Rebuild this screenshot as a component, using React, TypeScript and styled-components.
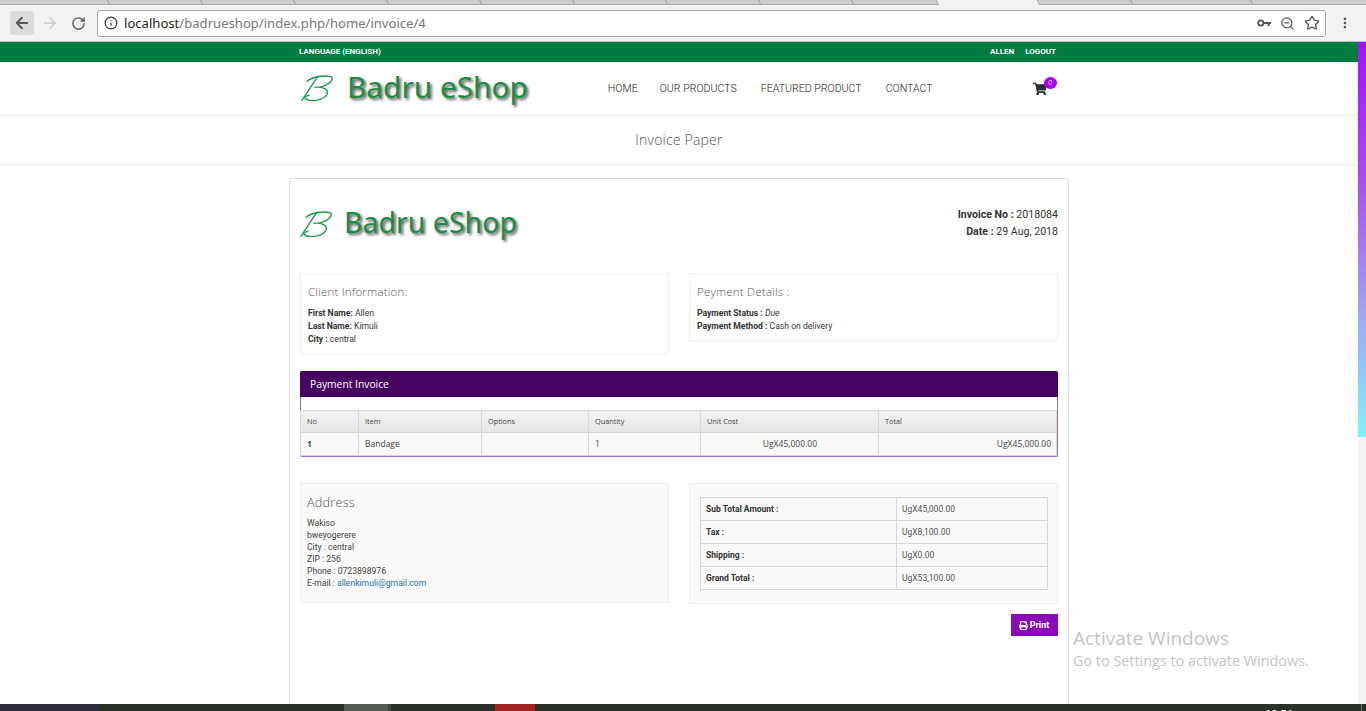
import styled, { createGlobalStyle } from 'styled-components';
import { ArrowLeft, ArrowRight, RotateCw, Info, ZoomOut, Star, MoreVertical } from 'lucide-react';
import { FaShoppingCart, FaPrint } from 'react-icons/fa';

const GlobalStyle = createGlobalStyle`
  html, body {
    margin: 0;
    height: 711px;
    overflow: hidden;
    background: #fff;
  }
  * {
    box-sizing: border-box;
  }
`;

const Screen = styled.div`
  position: relative;
  display: flex;
  flex-direction: column;
  width: 1366px;
  height: 711px;
  overflow: hidden;
  font-family: Roboto, 'Liberation Sans', sans-serif;
  color: #333;
`;

const TabStrip = styled.div`
  display: flex;
  flex: none;
  height: 5px;
  padding-left: 16px;
  background: #cdcdcd;
  border-bottom: 1px solid #a8a8a8;
`;

const Tab = styled.div<{ $active?: boolean; $w: number }>`
  flex: none;
  width: ${p => p.$w}px;
  height: ${p => (p.$active ? '5px' : '4px')};
  transform: skewX(25deg);
  background: ${p => (p.$active ? '#f2f2f2' : 'transparent')};
  border-right: 1px solid #a0a0a0;
`;

const Toolbar = styled.div`
  display: flex;
  flex: none;
  align-items: center;
  height: 37px;
  padding: 0 14px 0 10px;
  background: #f2f2f2;
  border-bottom: 1px solid #c4c4c4;
`;

const NavButton = styled.div<{ $pressed?: boolean; $color: string }>`
  display: flex;
  align-items: center;
  justify-content: center;
  flex: none;
  width: 24px;
  height: 24px;
  margin-right: 4px;
  border-radius: 3px;
  background: ${p => (p.$pressed ? '#dcdcdc' : 'transparent')};
  color: ${p => p.$color};
`;

const UrlBox = styled.div`
  display: flex;
  align-items: center;
  flex: 1;
  height: 27px;
  margin-left: 3px;
  padding: 0 5px 0 6px;
  background: #fff;
  border: 1px solid #a9a9a9;
  border-radius: 3px;
  font-family: 'Noto Sans', 'Liberation Sans', sans-serif;
  font-size: 13.1px;
  color: #777;
`;

const UrlHost = styled.span`
  margin-left: 6px;
  color: #222;
`;

const UrlActions = styled.div`
  display: flex;
  align-items: center;
  gap: 9px;
  margin-left: auto;
  color: #555;
`;

const MenuDots = styled.div`
  display: flex;
  justify-content: center;
  flex: none;
  width: 14px;
  margin-left: 12px;
  color: #555;
`;

const Viewport = styled.div`
  display: flex;
  flex: 1;
  min-height: 0;
`;

const Page = styled.div`
  flex: 1;
  min-width: 0;
  overflow: hidden;
`;

const ScrollTrack = styled.div`
  flex: none;
  width: 8px;
  background: #f5f5f5;
`;

const ScrollThumb = styled.div`
  height: 395px;
  background: linear-gradient(180deg, #a80cff 0%, #a94cf6 35%, #a0a8f4 70%, #80f2fa 100%);
`;

const TopBar = styled.div`
  height: 20px;
  background: #007c3e;
`;

const Container = styled.div`
  width: 780px;
  margin: 0 auto;
`;

const TopBarInner = styled(Container)`
  display: flex;
  align-items: center;
  justify-content: space-between;
  height: 100%;
  padding: 0 13px 2px 10px;
  font-size: 8px;
  font-weight: 700;
  color: #fff;
`;

const TopLinks = styled.div`
  display: flex;
  gap: 11px;
`;

const Header = styled.div`
  height: 54px;
  background: #fff;
  border-bottom: 1px solid #e9e9e9;
`;

const HeaderInner = styled(Container)`
  display: flex;
  align-items: center;
  height: 100%;
  padding-left: 12px;
`;

const Logo = styled.div`
  display: flex;
  align-items: center;
  flex: none;
`;

const InvoiceLogo = styled(Logo)`
  margin-top: 2px;
`;

const LogoText = styled.span<{ $size: number; $gap: number }>`
  margin-left: ${p => p.$gap}px;
  padding-bottom: 3px;
  font-family: 'Noto Sans', 'Open Sans', sans-serif;
  font-size: ${p => p.$size}px;
  line-height: 1;
  color: #1e8c45;
  text-shadow: 2px 2px 3px #555;
  white-space: nowrap;
`;

const Nav = styled.nav`
  display: flex;
  align-items: center;
  flex: none;
  width: 439px;
  margin-left: 80px;
  font-size: 10.6px;
  font-weight: 300;
  color: #222;
`;

const NavLink = styled.a<{ $gap: number }>`
  margin-right: ${p => p.$gap}px;
  white-space: nowrap;
`;

const CartWrap = styled.div`
  position: relative;
  display: flex;
  margin-left: auto;
  color: #2b3038;
`;

const CartBadge = styled.span`
  position: absolute;
  top: -5px;
  right: -10px;
  width: 13px;
  height: 12px;
  border-radius: 50%;
  background: #a800f0;
  color: #fff;
  font-size: 7px;
  line-height: 12px;
  text-align: center;
`;

const TitleBar = styled.div`
  height: 49px;
  border-bottom: 1px solid #e9e9e9;
  font-family: 'Open Sans', sans-serif;
  font-size: 14px;
  font-weight: 300;
  line-height: 48px;
  letter-spacing: 0.2px;
  text-align: center;
  color: #555;
`;

const Card = styled(Container)`
  margin-top: 13px;
  height: 600px;
  padding: 0 10px;
  background: #fff;
  border: 1px solid #ddd;
  border-radius: 3px;
`;

const InvoiceTop = styled.div`
  display: flex;
  align-items: flex-start;
  justify-content: space-between;
  height: 94px;
  padding-top: 27px;
`;

const InvoiceMeta = styled.div`
  font-size: 10.6px;
  line-height: 17px;
  text-align: right;
  color: #333;
`;

const TwoCols = styled.div`
  display: grid;
  grid-template-columns: 369px 369px;
  column-gap: 20px;
  align-items: start;
`;

const InfoBox = styled.div<{ $filled?: boolean; $height: number }>`
  height: ${p => p.$height}px;
  padding: 7px;
  background: ${p => (p.$filled ? '#f9f9f9' : '#fff')};
  border: 1px solid #eee;
`;

const AddressBox = styled(InfoBox)`
  padding: 7px 6px;
`;

const BoxTitle = styled.div<{ $size: number }>`
  margin-bottom: 4px;
  font-family: 'Open Sans', sans-serif;
  font-size: ${p => p.$size}px;
  font-weight: 300;
  line-height: 22px;
  letter-spacing: 0.2px;
  color: #555;
`;

const InfoLine = styled.div`
  font-size: 8.6px;
  line-height: 13px;
  color: #333;
`;

const AddressLine = styled.div`
  font-size: 8.6px;
  line-height: 12px;
  color: #444;
`;

const MailLink = styled.span`
  color: #2f6f9f;
`;

const Panel = styled.div`
  height: 86px;
  margin-top: 17px;
  margin-bottom: 26px;
  border: 1px solid #9a6cc6;
  border-top: none;
  border-radius: 2px;
`;

const PanelHead = styled.div`
  height: 26px;
  margin: 0 -1px 13px;
  padding-left: 10px;
  background: #46035f;
  border-radius: 2px 2px 0 0;
  font-family: 'Open Sans', sans-serif;
  font-size: 10.3px;
  line-height: 26px;
  color: #fff;
`;

const ItemsTable = styled.table`
  width: 756px;
  margin-left: -1px;
  border-collapse: collapse;
  table-layout: fixed;
  font-family: 'Open Sans', sans-serif;
  color: #444;
`;

const HeadCell = styled.th<{ $w: number }>`
  width: ${p => p.$w}px;
  height: 22px;
  padding: 0 6px 2px;
  background: linear-gradient(180deg, #f3f3f3, #e6e6e6);
  border: 1px solid #d8d8d8;
  font-size: 7.3px;
  font-weight: 400;
  text-align: left;
`;

const BodyCell = styled.td<{ $right?: boolean; $bold?: boolean; $pad?: number }>`
  height: 23px;
  padding: 0 ${p => p.$pad ?? 6}px 2px 6px;
  background: #f9f9f9;
  border: 1px solid #d8d8d8;
  font-size: 8.5px;
  font-weight: ${p => (p.$bold ? 700 : 400)};
  text-align: ${p => (p.$right ? 'right' : 'left')};
`;

const TotalsTable = styled.table`
  width: 348px;
  margin: 6px 0 0 3px;
  border-collapse: collapse;
  table-layout: fixed;
  font-size: 8.5px;
  color: #333;
`;

const TotalLabel = styled.td`
  width: 196px;
  height: 23px;
  padding: 0 5px;
  border: 1px solid #d8d8d8;
  font-weight: 700;
`;

const TotalValue = styled.td`
  height: 23px;
  padding: 0 5px;
  border: 1px solid #d8d8d8;
  color: #555;
`;

const PrintRow = styled.div`
  display: flex;
  justify-content: flex-end;
  margin-top: 10px;
`;

const PrintButton = styled.button`
  display: flex;
  align-items: center;
  justify-content: center;
  gap: 2px;
  width: 47px;
  height: 22px;
  padding: 0 1px 0 0;
  background: #8a09b8;
  border: none;
  font-family: Roboto, sans-serif;
  font-size: 9px;
  font-weight: 700;
  color: #fff;
`;

const Taskbar = styled.div`
  display: flex;
  flex: none;
  height: 7px;
  overflow: hidden;
  background: #2a2f28;
`;

const TaskItem = styled.div<{ $w: number; $color: string }>`
  flex: none;
  width: ${p => p.$w}px;
  background: ${p => p.$color};
`;

const TaskClock = styled.div`
  flex: none;
  margin-left: 730px;
  font-family: 'Open Sans', sans-serif;
  font-size: 11px;
  font-weight: 600;
  line-height: 20px;
  color: #fff;
`;

const TaskEdge = styled.div`
  flex: none;
  width: 1px;
  margin-left: auto;
  margin-right: 4px;
  background: #777;
`;

const Watermark = styled.div`
  position: absolute;
  left: 1073px;
  top: 627px;
  font-family: 'Open Sans', sans-serif;
  color: #c4c4c4;
`;

const WatermarkTitle = styled.div`
  font-size: 19px;
  line-height: 23px;
`;

const WatermarkSub = styled.div`
  font-size: 14.4px;
  line-height: 21px;
`;

const BrandMark = ({ width }: { width: number }) => (
  <svg width={width} height={width * 0.8} viewBox="0 0 33 26" fill="none" stroke="#1e9a4b" strokeWidth="1.4" strokeLinecap="round">
    <path d="M6 6C12 1 24 0 30 1.5C34 3.5 28 10 19 12" />
    <path d="M14 12C22 11.5 28 14 26 19C23 25 10 27 5 24C3 23 4 21 8 20" />
    <path d="M17 1C12 8 6 18 1 25" />
  </svg>
);

const KeyIcon = () => (
  <svg width="14" height="14" viewBox="0 0 14 14" fill="none">
    <circle cx="3.8" cy="7" r="2.6" stroke="#555" strokeWidth="1.8" />
    <path d="M6 6H14V8H12.6V10H10.6V8H6Z" fill="#555" />
  </svg>
);

const tabWidths = [93, 93, 93, 93, 93, 93, 93, 93, 93, 85, 101, 93, 120];

const rows = [
  { label: 'Sub Total Amount :', value: 'UgX45,000.00' },
  { label: 'Tax :', value: 'UgX8,100.00' },
  { label: 'Shipping :', value: 'UgX0.00' },
  { label: 'Grand Total :', value: 'UgX53,100.00' },
];

const columns = [
  { name: 'No', w: 58 },
  { name: 'Item', w: 123 },
  { name: 'Options', w: 107 },
  { name: 'Quantity', w: 112 },
  { name: 'Unit Cost', w: 178 },
  { name: 'Total', w: 178 },
];

const App = () => (
  <Screen>
    <GlobalStyle />
    <TabStrip>
      {tabWidths.map((w, i) => (
        <Tab key={i} $w={w} $active={i === 10} />
      ))}
    </TabStrip>
    <Toolbar>
      <NavButton $pressed $color="#555">
        <ArrowLeft size={18} strokeWidth={2.4} />
      </NavButton>
      <NavButton $color="#ccc">
        <ArrowRight size={18} />
      </NavButton>
      <NavButton $color="#666">
        <RotateCw size={15} strokeWidth={2.4} />
      </NavButton>
      <UrlBox>
        <Info size={14} color="#333" strokeWidth={2} />
        <UrlHost>localhost</UrlHost>/badrueshop/index.php/home/invoice/4
        <UrlActions>
          <KeyIcon />
          <ZoomOut size={15} strokeWidth={2} />
          <Star size={16} strokeWidth={2} />
        </UrlActions>
      </UrlBox>
      <MenuDots>
        <MoreVertical size={16} strokeWidth={2.6} />
      </MenuDots>
    </Toolbar>
    <Viewport>
      <Page>
        <TopBar>
          <TopBarInner>
            <span>LANGUAGE (ENGLISH)</span>
            <TopLinks>
              <span>ALLEN</span>
              <span>LOGOUT</span>
            </TopLinks>
          </TopBarInner>
        </TopBar>
        <Header>
          <HeaderInner>
            <Logo>
              <BrandMark width={33} />
              <LogoText $size={29.8} $gap={13}>Badru eShop</LogoText>
            </Logo>
            <Nav>
              <NavLink $gap={22}>HOME</NavLink>
              <NavLink $gap={24}>OUR PRODUCTS</NavLink>
              <NavLink $gap={24}>FEATURED PRODUCT</NavLink>
              <NavLink $gap={0}>CONTACT</NavLink>
              <CartWrap>
                <FaShoppingCart size={14} />
                <CartBadge>0</CartBadge>
              </CartWrap>
            </Nav>
          </HeaderInner>
        </Header>
        <TitleBar>Invoice Paper</TitleBar>
        <Card>
          <InvoiceTop>
            <InvoiceLogo>
              <BrandMark width={33} />
              <LogoText $size={28.5} $gap={11}>Badru eShop</LogoText>
            </InvoiceLogo>
            <InvoiceMeta>
              <div><b>Invoice No :</b> 2018084</div>
              <div><b>Date :</b> 29 Aug, 2018</div>
            </InvoiceMeta>
          </InvoiceTop>
          <TwoCols>
            <InfoBox $height={81}>
              <BoxTitle $size={11.5}>Client Information:</BoxTitle>
              <InfoLine><b>First Name:</b> Allen</InfoLine>
              <InfoLine><b>Last Name:</b> Kimuli</InfoLine>
              <InfoLine><b>City :</b> central</InfoLine>
            </InfoBox>
            <InfoBox $height={68}>
              <BoxTitle $size={11.5}>Peyment Details :</BoxTitle>
              <InfoLine><b>Payment Status :</b> <i>Due</i></InfoLine>
              <InfoLine><b>Payment Method :</b> Cash on delivery</InfoLine>
            </InfoBox>
          </TwoCols>
          <Panel>
            <PanelHead>Payment Invoice</PanelHead>
            <ItemsTable>
              <thead>
                <tr>
                  {columns.map(c => (
                    <HeadCell key={c.name} $w={c.w}>{c.name}</HeadCell>
                  ))}
                </tr>
              </thead>
              <tbody>
                <tr>
                  <BodyCell $bold>1</BodyCell>
                  <BodyCell>Bandage</BodyCell>
                  <BodyCell />
                  <BodyCell>1</BodyCell>
                  <BodyCell $right $pad={61}>UgX45,000.00</BodyCell>
                  <BodyCell $right $pad={5}>UgX45,000.00</BodyCell>
                </tr>
              </tbody>
            </ItemsTable>
          </Panel>
          <TwoCols>
            <AddressBox $filled $height={120}>
              <BoxTitle $size={12.7}>Address</BoxTitle>
              <AddressLine>Wakiso</AddressLine>
              <AddressLine>bweyogerere</AddressLine>
              <AddressLine>City : central</AddressLine>
              <AddressLine>ZIP : 256</AddressLine>
              <AddressLine>Phone : 0723898976</AddressLine>
              <AddressLine>E-mail : <MailLink>allenkimuli@gmail.com</MailLink></AddressLine>
            </AddressBox>
            <div>
              <InfoBox $filled $height={121}>
                <TotalsTable>
                  <tbody>
                    {rows.map(r => (
                      <tr key={r.label}>
                        <TotalLabel>{r.label}</TotalLabel>
                        <TotalValue>{r.value}</TotalValue>
                      </tr>
                    ))}
                  </tbody>
                </TotalsTable>
              </InfoBox>
              <PrintRow>
                <PrintButton>
                  <FaPrint size={9} />
                  Print
                </PrintButton>
              </PrintRow>
            </div>
          </TwoCols>
        </Card>
      </Page>
      <ScrollTrack>
        <ScrollThumb />
      </ScrollTrack>
    </Viewport>
    <Taskbar>
      <TaskItem $w={100} $color="#302c3c" />
      <TaskItem $w={244} $color="#2a2f28" />
      <TaskItem $w={44} $color="#555b54" />
      <TaskItem $w={3} $color="#40443e" />
      <TaskItem $w={104} $color="#2a2f28" />
      <TaskItem $w={40} $color="#a0231f" />
      <TaskClock>10:51</TaskClock>
      <TaskEdge />
    </Taskbar>
    <Watermark>
      <WatermarkTitle>Activate Windows</WatermarkTitle>
      <WatermarkSub>Go to Settings to activate Windows.</WatermarkSub>
    </Watermark>
  </Screen>
);

export default App;
